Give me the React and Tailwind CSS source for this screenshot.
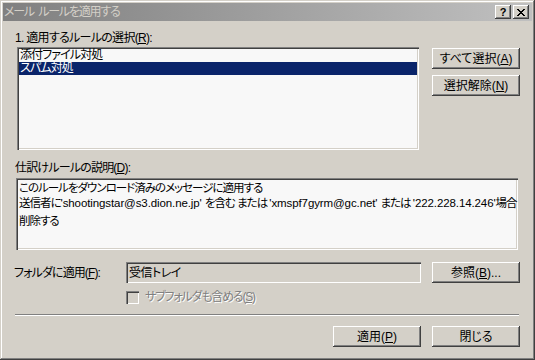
const RAISED = 'bg-[#d4d0c8] shadow-[inset_-1px_-1px_#404040,inset_1px_1px_#ffffff,inset_-2px_-2px_#808080]';
const SUNKEN = 'shadow-[inset_1px_1px_#808080,inset_2px_2px_#404040,inset_-1px_-1px_#ffffff,inset_-2px_-2px_#d4d0c8]';

function Btn({ children, className = '' }) {
  return (
    <div className={`${RAISED} w-[88px] h-[21px] flex items-center justify-center ${className}`}>
      {children}
    </div>
  );
}

function TitleBtn({ children }) {
  return (
    <div className={`${RAISED} w-[16px] h-[14px] flex items-center justify-center text-black`}>
      {children}
    </div>
  );
}

// latin runs in the description keep near-normal spacing, kana are set tighter
const L = ({ children }) => <span className="tracking-[-0.1px]">{children}</span>;

export default function App() {
  return (
    <div className="w-[535px] h-[360px] bg-[#d4d0c8] p-[3px] text-[12px] leading-[14px] text-black font-['Liberation_Sans','Noto_Sans_CJK_JP',sans-serif] [font-feature-settings:'palt'] shadow-[inset_-1px_-1px_#404040,inset_1px_1px_#d4d0c8,inset_-2px_-2px_#808080,inset_2px_2px_#ffffff] overflow-hidden">
      {/* title bar */}
      <div className="h-[18px] flex items-center bg-linear-to-r from-[#808080] to-[#c0c0c0] pl-[1px] pr-[3px]">
        <span className="text-[#d4d0c8] text-[12px] tracking-[-1.2px]">メール&nbsp; ルールを適用する</span>
        <div className="ml-auto flex gap-[2px]">
          <TitleBtn>
            <span className="font-bold text-[11px] leading-none font-['Liberation_Sans',sans-serif]">?</span>
          </TitleBtn>
          <TitleBtn>
            <svg width="8" height="7" viewBox="0 0 8 7" shapeRendering="crispEdges">
              <path d="M0 0h2v1H0zM6 0h2v1H6zM1 1h2v1H1zM5 1h2v1H5zM2 2h4v1H2zM3 3h2v1H3zM2 4h4v1H2zM1 5h2v1H1zM5 5h2v1H5zM0 6h2v1H0zM6 6h2v1H6z" fill="#000" />
            </svg>
          </TitleBtn>
        </div>
      </div>

      <div className="mt-[10px] ml-[12px] h-[14px] tracking-[-0.7px]">
        1. 適用するルールの選択(<u>R</u>):
      </div>

      <div className="mt-[2px] flex">
        <div className={`${SUNKEN} ml-[14px] w-[402px] h-[103px] bg-[#f8f8f8] p-[2px] tracking-[-0.9px]`}>
          <div className="h-[13px] leading-[13px] pl-[1px]">添付ファイル対処</div>
          <div className="h-[13px] leading-[13px] pl-[1px] bg-[#0a246a] text-white">スパム対処</div>
        </div>
        <div className="ml-[13px] mt-[1px] flex flex-col gap-[6px]">
          <Btn>すべて選択(<u>A</u>)</Btn>
          <Btn>選択解除(<u>N</u>)</Btn>
        </div>
      </div>

      <div className="mt-[11px] ml-[12px] h-[14px] tracking-[-0.8px]">
        仕訳けルールの説明(<u>D</u>):
      </div>

      <div className={`${SUNKEN} mt-[3px] ml-[13px] w-[502px] h-[72px] bg-[#f8f8f8] pl-[3px] pt-[3px] text-[11.5px] tracking-[-1px]`}>
        <div className="h-[14px]">このルールをダウンロード済みのメッセージに適用する</div>
        <div className="h-[14px] mt-[1px] whitespace-nowrap">
          送信者に<L>'shootingstar@s3.dion.ne.jp' </L>を含む または <L>'xmspf7gyrm@gc.net' </L>または <L>'222.228.14.246'</L>場合
        </div>
        <div className="h-[14px] mt-[4px]">削除する</div>
      </div>

      <div className="mt-[12px] flex items-center">
        <div className="ml-[11px] w-[112px] tracking-[-0.9px]">
          フォルダに適用(<u>F</u>):
        </div>
        <div className={`${SUNKEN} w-[295px] h-[21px] flex items-center pl-[3px] tracking-[-0.5px]`}>受信トレイ</div>
        <Btn className="ml-[11px]">参照(<u>B</u>)...</Btn>
      </div>

      <div className="mt-[7px] flex items-center">
        <div className={`${SUNKEN} ml-[123px] w-[13px] h-[13px] bg-[#d4d0c8]`} />
        <span className="ml-[6px] text-[#808080] [text-shadow:1px_1px_0_#ffffff] tracking-[-1.2px]">
          サブフォルダも含める(<u>S</u>)
        </span>
      </div>

      <div className="mt-[10px] ml-[12px] w-[504px] border-t border-t-[#808080] border-b border-b-white" />

      <div className="mt-[10px] flex">
        <Btn className="ml-[330px]">適用(<u>P</u>)</Btn>
        <Btn className="ml-[11px]">閉じる</Btn>
      </div>
    </div>
  );
}
